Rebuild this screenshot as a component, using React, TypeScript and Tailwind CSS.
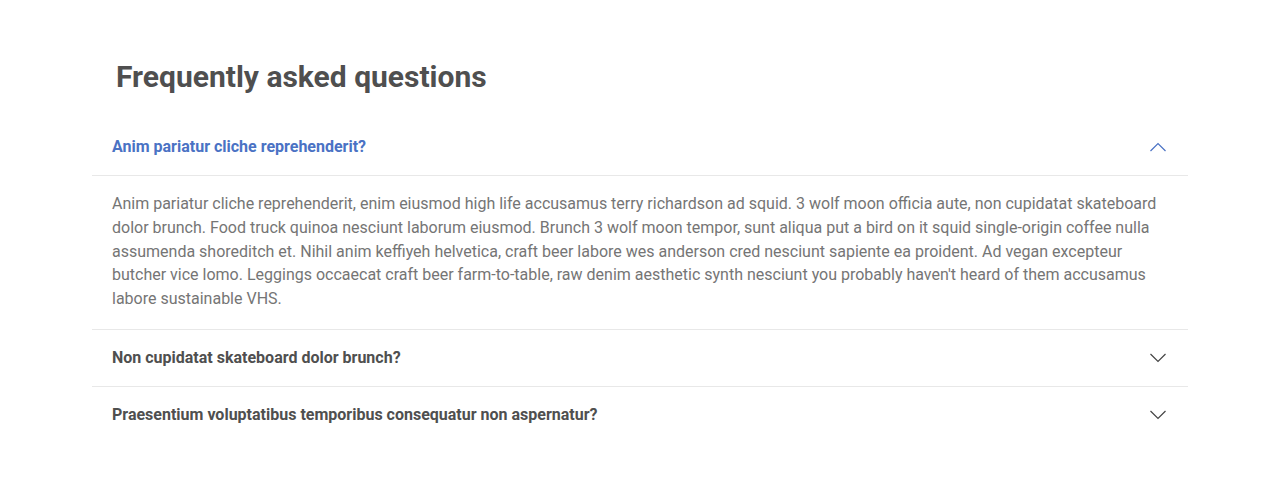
import React, { useState } from "react";

const items = [
  {
    q: "Anim pariatur cliche reprehenderit?",
    a: "Anim pariatur cliche reprehenderit, enim eiusmod high life accusamus terry richardson ad squid. 3 wolf moon officia aute, non cupidatat skateboard dolor brunch. Food truck quinoa nesciunt laborum eiusmod. Brunch 3 wolf moon tempor, sunt aliqua put a bird on it squid single-origin coffee nulla assumenda shoreditch et. Nihil anim keffiyeh helvetica, craft beer labore wes anderson cred nesciunt sapiente ea proident. Ad vegan excepteur butcher vice lomo. Leggings occaecat craft beer farm-to-table, raw denim aesthetic synth nesciunt you probably haven't heard of them accusamus labore sustainable VHS.",
  },
  { q: "Non cupidatat skateboard dolor brunch?", a: "" },
  { q: "Praesentium voluptatibus temporibus consequatur non aspernatur?", a: "" },
];

function Chevron({ up }: { up: boolean }) {
  return (
    <svg width="18" height="10" viewBox="0 0 18 10" fill="none">
      {up ? (
        <path d="M1.5 9 L9 1.5 L16.5 9" stroke="#4a72c4" strokeWidth="1.2" />
      ) : (
        <path d="M1.5 1 L9 8.5 L16.5 1" stroke="#444444" strokeWidth="1.2" />
      )}
    </svg>
  );
}

export default function App() {
  const [open, setOpen] = useState(0);
  return (
    <div className="min-h-[484px] bg-white" style={{ fontFamily: "Roboto, 'Liberation Sans', sans-serif" }}>
      <div className="w-[1096px] mx-auto pt-[58px]">
        <h2 className="px-6 text-[30px] leading-[38px] font-bold text-[#4f4f4f] mb-[23px]">
          Frequently asked questions
        </h2>
        <div>
          {items.map((it, i) => {
            const isOpen = open === i;
            return (
              <div key={i} className={i < items.length - 1 ? "border-b border-[#e8e8e8]" : ""}>
                <button
                  onClick={() => setOpen(isOpen ? -1 : i)}
                  className="w-full h-14 flex items-center justify-between pl-5 pr-[21px] text-left"
                >
                  <span
                    className={`text-[16px] font-bold ${isOpen ? "text-[#4a72c4]" : "text-[#4f4f4f]"}`}
                  >
                    {it.q}
                  </span>
                  <Chevron up={isOpen} />
                </button>
                {isOpen && (
                  <div className="border-t border-[#e8e8e8] px-5 pt-4 pb-[18px] text-[16px] leading-[23.75px] text-[#757575]">
                    {it.a}
                  </div>
                )}
              </div>
            );
          })}
        </div>
      </div>
    </div>
  );
}
